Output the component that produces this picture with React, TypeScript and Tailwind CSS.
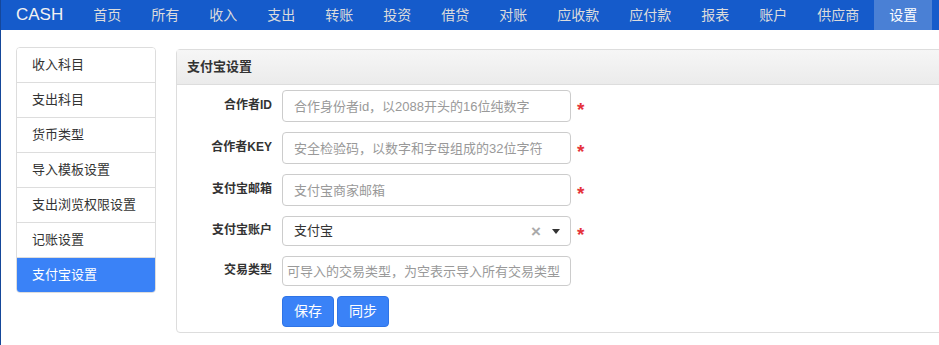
import { useState } from 'react'

const NAV = ['首页', '所有', '收入', '支出', '转账', '投资', '借贷', '对账', '应收款', '应付款', '报表', '账户', '供应商', '设置']
const MENU = ['收入科目', '支出科目', '货币类型', '导入模板设置', '支出浏览权限设置', '记账设置', '支付宝设置']

const FONT = { fontFamily: '"Liberation Sans", "Noto Sans CJK SC", sans-serif' }

function Star() {
  return <span className="ml-[6px] text-[19px] font-bold text-[#e5333b] leading-none mt-[7px]">*</span>
}

function Field({ label, placeholder, required = true, tall = true, tight = false }: {
  label: string
  placeholder: string
  required?: boolean
  tall?: boolean
  tight?: boolean
}) {
  return (
    <div className="flex items-center">
      <label className="w-[95px] shrink-0 text-right text-[12px] font-bold text-[#333] mb-[2px]">{label}</label>
      <input
        placeholder={placeholder}
        className={`ml-[10px] w-[289px] ${tall ? 'h-[32px]' : 'h-[30px]'} ${tight ? 'px-[4px]' : 'px-[11px]'} rounded-[4px] border border-[#ccc] text-[13px] text-[#555] placeholder-[#999] focus:outline-none`}
      />
      {required && <Star />}
    </div>
  )
}

export default function App() {
  const [active, setActive] = useState('支付宝设置')

  return (
    <div className="min-h-[345px] bg-white border-l border-[#15479a] overflow-hidden" style={FONT}>
      {/* Navbar */}
      <div className="h-[30px] bg-[#155bcb] flex items-stretch">
        <div className="px-[15px] flex items-center text-[17px] text-[#f2f2f2]">CASH</div>
        {NAV.map(n => (
          <div key={n}
            className={`px-[15px] flex items-center text-[14px] ${n === '设置' ? 'bg-[#4a80d5] text-white' : 'text-[#dcdcdc]'}`}>
            {n}
          </div>
        ))}
      </div>

      <div className="flex pl-[15px] pt-[17px]">
        {/* Sidebar */}
        <div className="w-[140px] shrink-0 self-start rounded-[4px] border border-[#ddd] overflow-hidden">
          {MENU.map((m, i) => (
            <div key={m} onClick={() => setActive(m)}
              className={`px-[15px] py-[7px] leading-[20px] text-[13px] cursor-pointer ${i < MENU.length - 1 ? 'border-b border-[#ddd]' : ''} ${active === m ? 'bg-[#3a82f7] text-white' : 'bg-white text-[#333]'}`}>
              {m}
            </div>
          ))}
        </div>

        {/* Panel */}
        <div className="flex-1 ml-[20px] mt-[2px] -mr-[10px] rounded-[4px] border border-[#ddd]">
          <div className="h-[35px] px-[10px] flex items-center border-b border-[#ddd] bg-gradient-to-b from-[#f6f6f6] to-[#ebebeb] text-[13px] font-bold text-[#333]">
            支付宝设置
          </div>
          <div className="pt-[5px] pb-[5px] flex flex-col gap-[10px]">
            <Field label="合作者ID" placeholder="合作身份者id，以2088开头的16位纯数字" />
            <Field label="合作者KEY" placeholder="安全检验码，以数字和字母组成的32位字符" />
            <Field label="支付宝邮箱" placeholder="支付宝商家邮箱" />

            <div className="flex items-center">
              <label className="w-[95px] shrink-0 text-right text-[12px] font-bold text-[#333] mb-[2px]">支付宝账户</label>
              <div className="ml-[10px] w-[289px] h-[30px] pl-[11px] pr-[10px] rounded-[4px] border border-[#ccc] flex items-center">
                <span className="flex-1 text-[13px] text-[#333]">支付宝</span>
                <span className="text-[17px] font-bold text-[#aaa] leading-none">×</span>
                <svg width="8" height="5" viewBox="0 0 8 5" className="ml-[11px]">
                  <path d="M0 0 L8 0 L4 5 Z" fill="#333" />
                </svg>
              </div>
              <Star />
            </div>

            <Field label="交易类型" placeholder="可导入的交易类型，为空表示导入所有交易类型" required={false} tall={false} tight />

            <div className="flex pl-[105px] gap-[3px]">
              <button className="h-[31px] px-[11px] rounded-[4px] bg-[#3a82f7] border border-[#2f74e6] text-white text-[14px]">保存</button>
              <button className="h-[31px] px-[11px] rounded-[4px] bg-[#3a82f7] border border-[#2f74e6] text-white text-[14px]">同步</button>
            </div>
          </div>
        </div>
      </div>
    </div>
  )
}
